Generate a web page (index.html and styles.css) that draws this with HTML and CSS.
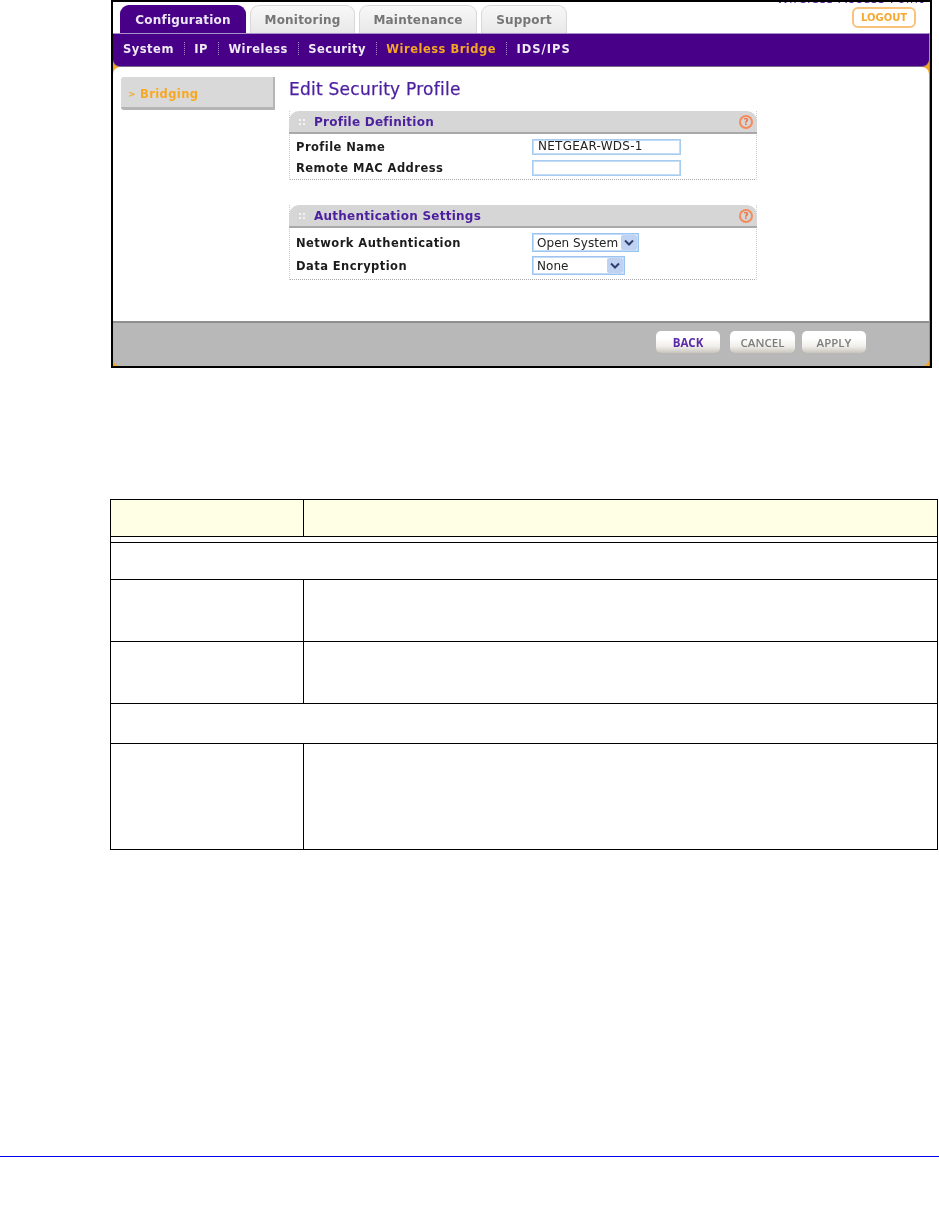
FILE: index.html
```html
<!DOCTYPE html>
<html lang="en">
<head>
  <meta charset="UTF-8" />
  <title>Edit Security Profile</title>
  <link rel="stylesheet" href="styles.css">
</head>
<body>

<div class="shot">
  <div class="shot-inner">
    <header class="top">
      <nav class="tabs">
        <a class="tab tab-config active">Configuration</a>
        <a class="tab tab-monitor">Monitoring</a>
        <a class="tab tab-maint">Maintenance</a>
        <a class="tab tab-support">Support</a>
      </nav>
      <div class="top-right">
        <div class="product">Wireless Access Point</div>
        <a class="logout">LOGOUT</a>
      </div>
    </header>

    <div class="frame">
      <nav class="subnav">
        <a>System</a><i></i>
        <a>IP</a><i></i>
        <a>Wireless</a><i></i>
        <a>Security</a><i></i>
        <a class="current">Wireless Bridge</a><i></i>
        <a class="ids">IDS/IPS</a>
      </nav>

      <div class="content">
        <aside class="side">
          <div class="side-item"><span class="chev">&gt;</span>Bridging</div>
        </aside>
        <main class="form">
          <h1>Edit Security Profile</h1>

          <section class="panel panel-profile">
            <div class="panel-head">
              <span class="grip"></span>
              <h2>Profile Definition</h2>
              <span class="help">?</span>
            </div>
            <div class="row row-first">
              <label>Profile Name</label>
              <input class="field" type="text" value="NETGEAR-WDS-1">
            </div>
            <div class="row">
              <label>Remote MAC Address</label>
              <input class="field" type="text">
            </div>
          </section>

          <section class="panel panel-auth">
            <div class="panel-head">
              <span class="grip"></span>
              <h2>Authentication Settings</h2>
              <span class="help">?</span>
            </div>
            <div class="row row-first row-select">
              <label>Network Authentication</label>
              <div class="select select-wide">
                <span>Open System</span>
                <span class="arrow"><svg width="10" height="7" viewBox="0 0 10 7"><path d="M1 1.5l4 4 4-4" fill="none" stroke="#2a3f6e" stroke-width="2"/></svg></span>
              </div>
            </div>
            <div class="row row-select">
              <label>Data Encryption</label>
              <div class="select select-narrow">
                <span>None</span>
                <span class="arrow"><svg width="10" height="7" viewBox="0 0 10 7"><path d="M1 1.5l4 4 4-4" fill="none" stroke="#2a3f6e" stroke-width="2"/></svg></span>
              </div>
            </div>
          </section>
        </main>
      </div>

      <footer class="actions">
        <button class="btn btn-back">BACK</button>
        <button class="btn btn-cancel">CANCEL</button>
        <button class="btn btn-apply">APPLY</button>
      </footer>
    </div>
  </div>
</div>

<table class="desc">
  <colgroup><col class="col-a"><col class="col-b"></colgroup>
  <tr class="r-head"><th></th><th></th></tr>
  <tr class="r-gap"><td colspan="2"></td></tr>
  <tr class="r-37"><td colspan="2"></td></tr>
  <tr class="r-62"><td></td><td></td></tr>
  <tr class="r-62"><td></td><td></td></tr>
  <tr class="r-40"><td colspan="2"></td></tr>
  <tr class="r-106"><td></td><td></td></tr>
</table>

<div class="page-rule"></div>

</body>
</html>
```

FILE: styles.css
```css
* {box-sizing: border-box;}
body {
  margin: 0;
  background-color: #fff;
  font-family: "DejaVu Sans", sans-serif;
}

/* screenshot of the router page */
.shot {
  width: 821px;
  height: 368px;
  margin-left: 111px;
  border: 2px solid #000;
  overflow: hidden;
  background-color: #fff;
}
.shot-inner {
  height: 100%;
  filter: blur(0.45px);
}
.top {
  display: flex;
  justify-content: space-between;
  height: 31px;
}
.tabs {
  display: flex;
  align-items: flex-end;
  gap: 4px;
  padding-left: 7px;
}
.tab {
  display: flex;
  align-items: center;
  justify-content: center;
  height: 28px;
  font-size: 12px;
  font-weight: bold;
  letter-spacing: 0.2px;
  color: #767676;
  background: linear-gradient(#f8f8f8, #e8e8e8);
  border: 1px solid #d8d8d8;
  border-bottom: none;
  border-radius: 9px 9px 0 0;
}
.tab.active {
  color: #ece6f4;
  background: #480088;
  border-color: #480088;
}
.tab-config {width: 126px;}
.tab-monitor {width: 105px;}
.tab-maint {width: 118px;}
.tab-support {width: 86px;}
.top-right {
  display: flex;
  flex-direction: column;
  align-items: flex-end;
  padding-right: 5px;
}
.product {
  height: 5px;
  margin-top: -2px;
  margin-right: 1px;
  line-height: 0;
  transform: translateY(-1px);
  font-size: 13px;
  font-weight: 500;
  letter-spacing: 0.4px;
  color: #5a2aa8;
}
.logout {
  display: flex;
  align-items: center;
  justify-content: center;
  width: 64px;
  height: 21px;
  margin-top: 2px;
  margin-right: 9px;
  font-size: 10px;
  font-weight: bold;
  color: #f7a833;
  border: 2px solid #f9c27c;
  border-radius: 6px;
}

.frame {
  height: 333px;
  background-color: #f5a623;
  border-right: 1px solid #a09880;
}
.subnav {
  display: flex;
  align-items: center;
  gap: 9.7px;
  height: 34px;
  padding: 0 0 3px 10px;
  font-size: 11.5px;
  font-weight: bold;
  letter-spacing: 0.5px;
  color: #eeeaf4;
  background-color: #480088;
  border-top: 1px solid #a890c8;
  border-bottom: 1px solid #7a6a90;
  border-radius: 0 0 7px 7px;
}
.subnav i {
  width: 1px;
  height: 13px;
  border-left: 1px dotted #a58cc4;
}
.subnav .current {color: #f5a623;}
.subnav .ids {letter-spacing: 1px;}

.content {
  display: flex;
  height: 254px;
  background-color: #fff;
  border-radius: 7px 7px 0 0;
}
.side {
  width: 176px;
  padding: 10px 0 0 8px;
}
.side-item {
  display: flex;
  align-items: center;
  width: 154px;
  height: 33px;
  padding-top: 3px;
  font-size: 11.5px;
  font-weight: bold;
  letter-spacing: 0.4px;
  color: #f7a823;
  background-color: #d9d9d9;
  border-right: 2px solid #b5b5b5;
  border-bottom: 3px solid #b5b5b5;
  border-radius: 3px 0 0 3px;
}
.chev {
  width: 19px;
  padding-left: 7px;
  font-size: 9px;
}
.form {width: 468px;}
h1 {
  margin: 12px 0 12px;
  height: 20px;
  line-height: 20px;
  font-size: 17px;
  font-weight: normal;
  letter-spacing: 0.25px;
  -webkit-text-stroke: 0.25px #4b1f9e;
  color: #4b1f9e;
}
.panel {
  border-bottom: 1px dotted #aaa;
  border-left: 1px dotted #ccc;
  border-right: 1px dotted #ccc;
}
.panel-profile {height: 69px;}
.panel-auth {
  height: 75px;
  margin-top: 25px;
}
.panel-head {
  display: flex;
  align-items: center;
  height: 23px;
  margin: 0 -1px;
  padding: 0 4px 0 9px;
  background-color: #d6d6d6;
  border-bottom: 2px solid #a9a9a9;
  border-radius: 10px 10px 0 0;
}
.grip {
  width: 7px;
  height: 7px;
  margin-right: 9px;
  background: radial-gradient(circle, #f4f4f4 1px, transparent 1.2px) 0 0 / 4px 4px;
}
h2 {
  flex: 1;
  margin: 0;
  font-size: 12px;
  font-weight: bold;
  letter-spacing: 0.25px;
  color: #4b1f9e;
}
.help {
  width: 14px;
  height: 14px;
  line-height: 10px;
  text-align: center;
  font-size: 9px;
  font-weight: bold;
  color: #f2703a;
  border: 2px solid #f58a5a;
  border-radius: 50%;
}
.row {
  display: flex;
  align-items: center;
  height: 21px;
  padding-left: 6px;
}
.row-first {margin-top: 2px;}
.panel-auth .row-first {margin-top: 3px;}
.row-select {height: 23px;}
label {
  width: 236px;
  font-size: 11.5px;
  font-weight: bold;
  letter-spacing: 0.45px;
  color: #1c1c1c;
}
.field {
  width: 149px;
  height: 16px;
  padding: 0 5px 1px;
  font-family: "DejaVu Sans", sans-serif;
  font-size: 12px;
  letter-spacing: 0.25px;
  color: #222;
  border: 1px solid #a8ccf0;
  outline: 1px solid #c4dcf5;
  outline-offset: -2px;
}
.select {
  display: flex;
  align-items: center;
  justify-content: space-between;
  height: 19px;
  padding: 0 1px 0 4px;
  font-size: 12px;
  letter-spacing: 0.05px;
  color: #222;
  border: 1px solid #9cc4f0;
  outline: 1px solid #c4dcf5;
  outline-offset: -2px;
}
.select-wide {width: 107px;}
.select-narrow {width: 93px;}
.arrow {
  display: flex;
  align-items: center;
  justify-content: center;
  width: 16px;
  height: 15px;
  background-color: #c0d2f2;
  border-radius: 2px;
}

.actions {
  display: flex;
  justify-content: flex-end;
  gap: 10px;
  height: 45px;
  padding: 8px 63px 0 0;
  background-color: #b8b8b8;
  border-top: 2px solid #8e8e8e;
  border-radius: 0 0 7px 7px;
}
.btn {
  width: 64px;
  height: 22px;
  padding: 0;
  font-family: "Open Sans", sans-serif;
  font-size: 11.5px;
  font-weight: 600;
  color: #7c7c7c;
  background: linear-gradient(#fff 35%, #f0eeea 70%, #c9c5bd);
  border: none;
  border-radius: 5px;
}
.btn-back {
  color: #5a2aa8;
  font-weight: 700;
}
.btn-cancel {width: 65px;}
.btn-apply {margin-left: -3px;}

/* description table, cell text is not legible in the source */
.desc {
  width: 828px;
  margin: 131px 0 0 110px;
  table-layout: fixed;
  border-collapse: collapse;
}
.desc th, .desc td {
  padding: 0;
  border: 1px solid #000;
}
.desc th {background-color: #ffffe6;}
.col-a {width: 193px;}
.r-head {height: 37px;}
.r-gap {height: 6px;}
.r-37 {height: 37px;}
.r-62 {height: 62px;}
.r-40 {height: 40px;}
.r-106 {height: 106px;}

.page-rule {
  height: 1px;
  margin-top: 306px;
  background-color: #0000f0;
}
```
